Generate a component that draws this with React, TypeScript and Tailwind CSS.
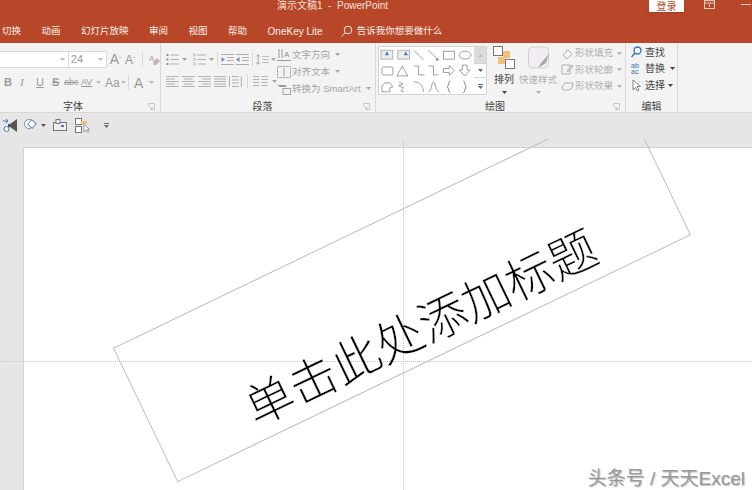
const CJK = "font-['Liberation_Sans','Noto_Sans_CJK_SC',sans-serif]";

const tabs = ["切换", "动画", "幻灯片放映", "审阅", "视图", "帮助"];

function Caret({ className = "" }: { className?: string }) {
  return (
    <svg width="5" height="3" viewBox="0 0 5 3" className={className}>
      <path d="M0 0h5L2.5 3z" fill="currentColor" />
    </svg>
  );
}

// stacked strokes, used for the paragraph alignment buttons
function AlignIcon({ kind }: { kind: "left" | "center" | "right" | "full" }) {
  const rows = [13, 9, 13, 9, 13];
  return (
    <svg width="13" height="13" viewBox="0 0 13 13" stroke="#b0b0b0" strokeWidth="1">
      {rows.map((w, i) => {
        const len = kind === "full" ? 13 : w;
        const x = kind === "left" || kind === "full" ? 0 : kind === "right" ? 13 - len : (13 - len) / 2;
        return <line key={i} x1={x} x2={x + len} y1={1.5 + i * 2.5} y2={1.5 + i * 2.5} />;
      })}
    </svg>
  );
}

function ListIcon({ numbered }: { numbered?: boolean }) {
  return (
    <svg width="13" height="13" viewBox="0 0 13 13" stroke="#b0b0b0">
      {[2, 6.5, 11].map((y) => (
        <g key={y}>
          <rect x="0.5" y={y - 1} width="2" height="2" fill={numbered ? "none" : "#8c8c8c"} stroke={numbered ? "#b5b5b5" : "none"} strokeWidth="0.6" />
          <line x1="4.5" x2="13" y1={y} y2={y} />
        </g>
      ))}
    </svg>
  );
}

function IndentIcon({ out }: { out?: boolean }) {
  return (
    <svg width="13" height="13" viewBox="0 0 13 13" stroke="#b0b0b0">
      {[1.5, 4.5, 7.5, 11.5].map((y, i) => (
        <line key={y} x1={i === 0 || i === 3 ? 0 : 6} x2="13" y1={y} y2={y} />
      ))}
      <path d={out ? "M0 6.5L3.5 4v5z" : "M4 6.5L.5 4v5z"} fill="#6f8fb0" stroke="none" />
    </svg>
  );
}

function Launcher() {
  return (
    <svg width="7" height="7" viewBox="0 0 7 7" fill="none" stroke="#b5b5b5" className="absolute right-[5px] bottom-[2px]">
      <path d="M.5 3V.5H6.5V6.5H3M1 3.5L4 6M4 4v2H2" strokeWidth="0.7" />
    </svg>
  );
}

function Gallery() {
  return (
    <div className="flex h-[49px] w-[109px] border border-[#d4d4d4] bg-white">
      <svg width="96" height="47" viewBox="0 0 96 47" fill="none" stroke="#767676" strokeWidth="0.7">
        <rect x="2" y="3" width="12" height="9" fill="#ececec" stroke="#999" />
        <path d="M6 8l2-4 2 4z" fill="#3f78c4" stroke="none" />
        <rect x="19" y="3" width="12" height="9" fill="#ececec" stroke="#999" />
        <path d="M25 8l2-4 2 4z" fill="#3f78c4" stroke="none" />
        <path d="M35 3l10 10M50 3l10 10" />
        <path d="M58 11l2 2-2 0z" fill="#767676" />
        <rect x="65" y="4" width="11" height="8" />
        <ellipse cx="87" cy="8" rx="6" ry="4" />
        <rect x="3" y="20" width="11" height="8" rx="1.5" />
        <path d="M18 29l5.500-10 5.500 10zM35 19h5v9h6M50 19h5v9h5" />
        <path d="M65 21.500h6v-3l5 5-5 5v-3h-6zM84 18h5v5h3l-5.500 6-5.500-6h3z" />
        <path d="M3 45v-6l3-3h5l3 4-3 1v4zM20 35l4 2-4 2 5 2-3 3 3 1" />
        <path d="M35 35c6 0 9 3 10 10M50 45c3 0 3-10 5-10s2 10 6 10" />
        <path d="M72 34c-2 0-1.500 5-3 6 1.500 1 1 6 3 6M85 34c2 0 1.500 5 3 6-1.500 1-1 6-3 6" strokeWidth="0.9" />
      </svg>
      <div className="ml-auto flex w-[12px] flex-col text-[#666]">
        <div className="flex h-[16px] items-center justify-center bg-[#dcdcdc] text-[#bbb]">
          <Caret className="rotate-180" />
        </div>
        <div className="flex h-[15px] items-center justify-center border-y border-[#d4d4d4]">
          <Caret />
        </div>
        <div className="flex flex-1 flex-col items-center justify-center gap-[1px]">
          <div className="h-px w-[5px] bg-[#666]" />
          <Caret />
        </div>
      </div>
    </div>
  );
}

function FontGroup() {
  return (
    <div className="relative h-full w-[161px] shrink-0 border-r border-[#d8d8d8] text-[#9a9a9a]">
      <div className="mt-[8px] flex h-[17px] items-center">
        <div className="flex h-full w-[69px] items-center justify-end border border-l-0 border-[#d9d9d9] bg-white pr-[3px] text-[#bbb]">
          <Caret />
        </div>
        <div className="flex h-full w-[38px] items-center justify-between border border-l-0 border-[#d9d9d9] bg-white pl-[2px] pr-[3px] text-[#bbb]">
          <span className="text-[11px] text-[#9a9a9a]">24</span>
          <Caret />
        </div>
        <span className="ml-[3px] text-[14px]">A<sup className="text-[6px]">ˆ</sup></span>
        <span className="ml-[4px] text-[12px]">A<sup className="text-[6px]">ˇ</sup></span>
        <div className="ml-[7px] h-[15px] w-px bg-[#d8d8d8]" />
        <svg width="11" height="13" viewBox="0 0 11 13" className="ml-[6px]">
          <text x="0" y="8" fontSize="8" fill="#a5a5a5">A</text>
          <path d="M4 9l4-4 3 3-4 4H5z" fill="#c4b3b8" />
        </svg>
      </div>
      <div className="mt-[6px] flex h-[17px] items-center pl-[4px] text-[11px] leading-none">
        <span className="w-[16px] font-bold">B</span>
        <span className="w-[16px] font-['Liberation_Serif',serif] italic">I</span>
        <span className="w-[16px] underline">U</span>
        <span className="w-[12px] font-bold line-through">S</span>
        <span className="w-[17px] text-[9px] line-through">abc</span>
        <span className="w-[15px] text-[9px] underline">AV</span>
        <Caret className="mr-[4px] text-[#bbb]" />
        <span className="w-[15px] text-[12px]">Aa</span>
        <Caret className="ml-[1px] text-[#bbb]" />
        <div className="ml-[2px] h-[15px] w-px bg-[#d8d8d8]" />
        <span className="ml-[5px] text-[14px]">A</span>
        <Caret className="ml-[6px] text-[#bbb]" />
      </div>
      <div className="absolute bottom-[-2px] left-0 w-[146px] text-center text-[10px] leading-[14px] text-[#444]">字体</div>
      <Launcher />
    </div>
  );
}

function ParagraphGroup() {
  return (
    <div className="relative flex h-full w-[215px] shrink-0 border-r border-[#d8d8d8] pl-[5px] text-[#a5a5a5]">
      <div className="w-[111px] pt-[9px]">
        <div className="flex h-[14px] items-center">
          <ListIcon />
          <Caret className="ml-[3px]" />
          <span className="w-[6px]" />
          <ListIcon numbered />
          <Caret className="ml-[3px]" />
          <div className="mx-[3px] h-[14px] w-px bg-[#d8d8d8]" />
          <IndentIcon />
          <span className="w-[2px]" />
          <IndentIcon out />
          <div className="mx-[3px] h-[14px] w-px bg-[#d8d8d8]" />
          <svg width="13" height="13" viewBox="0 0 15 13" stroke="#8f9aa5">
            <path d="M2.500 1v11M.5 3l2-2 2 2M.5 10l2 2 2-2" fill="none" />
            <path d="M7 3h8M7 6.500h8M7 10h8" stroke="#b5b5b5" />
          </svg>
          <Caret className="ml-[2px]" />
        </div>
        <div className="mt-[8px] flex h-[14px] items-center gap-[3px]">
          <AlignIcon kind="left" />
          <AlignIcon kind="center" />
          <AlignIcon kind="right" />
          <AlignIcon kind="full" />
          <svg width="13" height="13" viewBox="0 0 13 13" stroke="#b0b0b0" fill="none">
            <path d="M.5 1v11M12.500 1v11M3 1.500h7M3 5h7M3 8h7M3 11.500h7" />
          </svg>
          <div className="mx-[2px] h-[14px] w-px bg-[#d8d8d8]" />
          <svg width="15" height="13" viewBox="0 0 15 13" stroke="#b0b0b0">
            <path d="M0 1.500h6.500M0 4.500h6.500M0 7.500h6.500M0 10.500h6.500M8.500 1.500h6.500M8.500 4.500h6.500M8.500 7.500h6.500M8.500 10.500h6.500" />
          </svg>
          <Caret className="ml-[1px]" />
        </div>
      </div>
      <div className="flex flex-col pt-[3px] text-[9.500px] leading-[17px]">
        <div className="flex h-[17px] items-center gap-[1px]">
          <svg width="14" height="14" viewBox="0 0 14 14" stroke="#9a9a9a" fill="none">
            <path d="M2 1v9M5 1v9M0 12.500h14" />
            <text x="7" y="9" fontSize="8" fill="#8d8d8d" stroke="none">A</text>
          </svg>
          文字方向
          <Caret className="ml-[4px]" />
        </div>
        <div className="flex h-[17px] items-center gap-[1px]">
          <svg width="14" height="14" viewBox="0 0 14 14" stroke="#9a9a9a" fill="none" strokeDasharray="2 1">
            <rect x="0.500" y="1.500" width="13" height="11" />
            <path d="M7 3v8" strokeDasharray="none" />
          </svg>
          对齐文本
          <Caret className="ml-[4px]" />
        </div>
        <div className="flex h-[17px] items-center gap-[1px]">
          <svg width="14" height="14" viewBox="0 0 14 14">
            <path d="M0 3h8l2 2H3z" fill="#9a9a9a" />
            <rect x="6" y="6.500" width="7.500" height="6" fill="#f3f3f3" stroke="#a5a5a5" />
          </svg>
          转换为 SmartArt
          <Caret className="ml-[4px]" />
        </div>
      </div>
      <div className="absolute bottom-[-2px] left-0 w-[203px] text-center text-[10px] leading-[14px] text-[#444]">段落</div>
      <Launcher />
    </div>
  );
}

function DrawingGroup() {
  return (
    <div className="relative flex h-full w-[250px] shrink-0 border-r border-[#d8d8d8] pl-[2px] pt-[3px]">
      <Gallery />
      <div className="ml-[5px] flex w-[24px] flex-col items-center text-[#444]">
        <svg width="23" height="24" viewBox="0 0 23 24">
          <rect x="0.500" y="0.500" width="9" height="9" fill="#fff" stroke="#777" />
          <rect x="10" y="5" width="7" height="7" fill="#f0c078" />
          <rect x="5" y="11" width="7" height="7" fill="#f0c078" />
          <rect x="12.500" y="13.500" width="9" height="9" fill="#fff" stroke="#777" />
        </svg>
        <span className="mt-[3px] text-[10px] leading-[14px]">排列</span>
        <Caret className="mt-[4px]" />
      </div>
      <div className="ml-[2px] flex w-[40px] flex-col items-center text-[#b0b0b0]">
        <svg width="24" height="24" viewBox="0 0 24 24">
          <rect x="2.500" y="1" width="20" height="21" rx="4" fill="#f1edf2" stroke="#d0d0d0" />
          <path d="M12 22l3-5 8-9-3 9z" fill="#a8a8a8" />
        </svg>
        <span className="mt-[3px] whitespace-nowrap text-[9.500px] leading-[14px]">快速样式</span>
        <Caret className="mt-[4px]" />
      </div>
      <div className="ml-[3px] flex flex-col text-[9.500px] leading-[16px] text-[#b0b0b0]">
        {[
          ["形状填充", "M2 8l5-5 4 4-5 5zM5 2l2 2"],
          ["形状轮廓", "M1 2h8v9H1zM6 8l5-6 1 1-5 6z"],
          ["形状效果", "M1 7l3-4h8l-1 5-3 2H2z"],
        ].map(([label, d]) => (
          <div key={label} className="flex h-[16.500px] items-center gap-[1px] first:mt-[-1px]">
            <svg width="13" height="13" viewBox="0 0 13 13" fill="none" stroke="#b0b0b0">
              <path d={d} />
            </svg>
            {label}
            <Caret className="ml-[3px]" />
          </div>
        ))}
      </div>
      <div className="absolute bottom-[-2px] left-0 w-[238px] text-center text-[10px] leading-[14px] text-[#444]">绘图</div>
      <Launcher />
    </div>
  );
}

function EditGroup() {
  return (
    <div className="relative h-full w-[52px] shrink-0 border-r border-[#d8d8d8] pl-[5px] pt-[1px] text-[10px] text-[#444]">
      <div className="flex h-[16.500px] items-center gap-[3px]">
        <svg width="11" height="12" viewBox="0 0 11 12" fill="none" stroke="#2f6fb5" strokeWidth="1.300">
          <circle cx="6.500" cy="4.500" r="3.500" />
          <path d="M4 7l-3.500 4" />
        </svg>
        查找
      </div>
      <div className="flex h-[16.500px] items-center gap-[3px]">
        <span className="w-[11px] text-[7px] leading-[6px] text-[#2f6fb5]">
          ab
          <br />
          ac
        </span>
        替换
        <Caret className="ml-[2px]" />
      </div>
      <div className="flex h-[16.500px] items-center gap-[3px]">
        <svg width="11" height="13" viewBox="0 0 11 13" fill="#fff" stroke="#666" strokeWidth="0.8">
          <path d="M2 1v10l2.500-2.500 2 3.500 1.500-1-2-3.500h3.500z" />
        </svg>
        选择
        <Caret />
      </div>
      <div className="absolute inset-x-0 bottom-[-2px] text-center text-[10px] leading-[14px]">编辑</div>
    </div>
  );
}

function QuickBar() {
  return (
    <div className="flex h-[26px] shrink-0 items-center bg-[#e6e6e6] pb-[2px] pl-[3px]">
      <svg width="15" height="15" viewBox="0 0 15 15">
        <path d="M14 1v13L7 9H5V6h2z" fill="#555" />
        <path d="M0 3h5M3 1l2 2-2 2" stroke="#3f78c4" fill="none" />
        <circle cx="3.500" cy="11" r="2.500" fill="#fff" stroke="#3f78c4" />
      </svg>
      <svg width="14" height="14" viewBox="0 0 14 14" className="ml-[6px]" fill="#fff" stroke="#6d8fb5">
        <circle cx="5" cy="6" r="4.500" />
        <rect x="5" y="3" width="6" height="6" transform="rotate(40 8 6)" />
      </svg>
      <Caret className="ml-[3px] text-[#555]" />
      <svg width="14" height="12" viewBox="0 0 14 12" className="ml-[7px]" fill="#eee" stroke="#777">
        <rect x="0.500" y="3.500" width="13" height="8" />
        <rect x="3" y="0.500" width="4" height="4" />
        <rect x="8" y="6" width="3" height="2" fill="#3f78c4" stroke="none" />
      </svg>
      <svg width="15" height="15" viewBox="0 0 15 15" className="ml-[8px]" fill="#fff" stroke="#777">
        <rect x="0.500" y="0.500" width="6" height="6" />
        <rect x="0.500" y="8.500" width="6" height="6" />
        <rect x="6" y="3" width="6" height="3" fill="#f0c078" stroke="none" />
        <path d="M9 6v8l2-2 2 2.500 1-1-2-2h2.500z" strokeWidth="0.700" />
      </svg>
      <div className="ml-[14px] flex flex-col items-center gap-[1px] text-[#666]">
        <div className="h-px w-[5px] bg-[#666]" />
        <Caret />
      </div>
    </div>
  );
}

export default function App() {
  return (
    <div className={`flex h-[490px] w-[752px] flex-col overflow-hidden bg-[#e6e6e6] ${CJK}`}>
      {/* title bar */}
      <div className="relative flex h-[25px] shrink-0 items-start bg-[#b74728] text-white">
        <div className="ml-[277px] mt-[-1px] w-[110px] whitespace-nowrap text-[10px] leading-[13px] text-[#f6e3dc]">
          演示文稿1&nbsp; -&nbsp; PowerPoint
        </div>
        <div className="ml-[262px] flex h-[12px] w-[35px] items-center justify-center bg-white text-[10px] text-[#b74728] shadow-sm">
          登录
        </div>
        <svg width="12" height="9" viewBox="0 0 12 9" fill="none" stroke="#f0cfc4" className="ml-[20px]">
          <rect x="0.500" y="0.500" width="10" height="8" />
          <path d="M0 3h11M5.500 4v3" />
        </svg>
        <div className="ml-[25px] mt-[4px] h-px w-[10px] bg-[#f0cfc4]" />
      </div>

      {/* tabs */}
      <div className="flex h-[18px] shrink-0 items-center bg-[#b74728] pb-[6px] pl-[2px] text-[9.500px] text-[#fbeee9]">
        <div className="flex gap-[20.500px]">
          {tabs.map((t) => (
            <span key={t} className="whitespace-nowrap">
              {t}
            </span>
          ))}
          <span className="whitespace-nowrap text-[10px]">OneKey Lite</span>
        </div>
        <svg width="12" height="12" viewBox="0 0 12 12" fill="none" stroke="#fbeee9" className="ml-[18px]">
          <circle cx="7" cy="5" r="3.800" />
          <path d="M4 8l-3.500 3.500" />
        </svg>
        <span className="ml-[4px] whitespace-nowrap">告诉我你想要做什么</span>
      </div>

      {/* ribbon */}
      <div className="flex h-[70px] shrink-0 border-b border-[#d8d8d8] bg-[#f3f3f3]">
        <FontGroup />
        <ParagraphGroup />
        <DrawingGroup />
        <EditGroup />
      </div>

      <QuickBar />

      {/* editing pane */}
      <div className="relative flex-1 overflow-hidden">
        <div className="ml-[23px] mt-[8px] h-full border-l border-t border-[#d4d4d4] bg-white" />
        <div className="absolute left-0 right-0 top-[222px] border-t border-dotted border-[#c4c4c4]" />
        <div className="absolute bottom-0 left-[403px] top-0 border-l border-dotted border-[#c4c4c4]" />
        <div className="absolute left-[117.400px] top-[77.600px] flex h-[149px] w-[570px] -rotate-[25.700deg] items-end justify-center border border-[#c0c0c0] pb-[1px] pl-[3px]">
          <span className="whitespace-nowrap text-[48px] font-light leading-[60px] text-black [-webkit-text-stroke:0.3px_white]">单击此处添加标题</span>
        </div>
        <div className="absolute bottom-[-1px] right-[7px] whitespace-nowrap text-[19px] leading-[24px] text-[#999] [text-shadow:1px_1px_1px_rgba(0,0,0,0.25)]">
          头条号 / 天天Excel
        </div>
      </div>
    </div>
  );
}
